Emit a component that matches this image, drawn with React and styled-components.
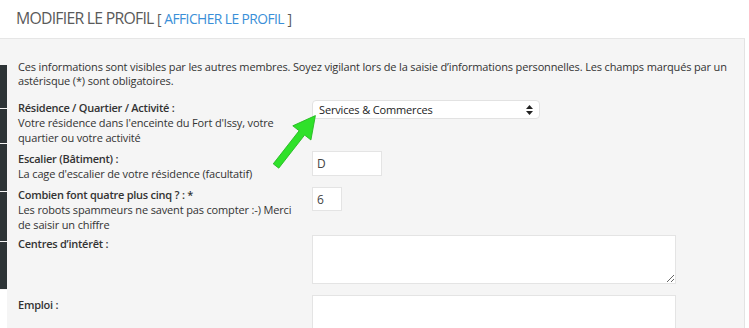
import React from "react";
import styled, { createGlobalStyle } from "styled-components";

const GlobalStyle = createGlobalStyle`
  html, body {
    margin: 0;
    padding: 0;
    background: #fff;
    font-family: "Open Sans", "DejaVu Sans", sans-serif;
    color: #333;
  }
`;

const Page = styled.div`
  width: 749px;
  height: 328px;
  overflow: hidden;
  position: relative;
`;

const Header = styled.div`
  height: 38px;
  box-sizing: border-box;
  padding: 7px 0 0 16px;
  font-size: 15.8px;
  letter-spacing: -0.75px;
  color: #5a5a5a;
  white-space: nowrap;
`;

const Bracket = styled.span`
  font-size: 13.8px;
  letter-spacing: -0.5px;
`;

const ProfileLink = styled.a`
  color: #3a8fd8;
  text-decoration: none;
  font-size: 13.8px;
  letter-spacing: -0.55px;
`;

const Panel = styled.div`
  position: relative;
  width: 745px;
  height: 290px;
  box-sizing: border-box;
  background: #f5f5f5;
  border-top: 1px solid #e6e6e6;
  border-right: 1px solid #e3e3e3;
  padding: 21px 0 0 18px;
  font-size: 11px;
  letter-spacing: -0.15px;
  line-height: 15px;
`;

const Intro = styled.p`
  margin: 0 0 12px 0;
  width: 712px;
  line-height: 14px;
`;

const Row = styled.div`
  display: grid;
  grid-template-columns: 294px 1fr;
  margin-bottom: ${(p) => p.gap || 6}px;
`;

const LabelCell = styled.div`
  padding-top: ${(p) => p.top || 0}px;
`;

const Label = styled.div`
  font-weight: 600;
  letter-spacing: -0.25px;
`;

const Help = styled.div`
  width: 286px;
`;

const SelectBox = styled.div`
  width: 228px;
  height: 19px;
  box-sizing: border-box;
  background: #fff;
  border: 1px solid #e2e2e2;
  border-radius: 4px;
  display: flex;
  align-items: center;
  justify-content: space-between;
  padding: 0 6px 0 6px;
  font-size: 11px;
  color: #222;
`;

const Field = styled.input`
  display: block;
  width: ${(p) => p.w}px;
  height: ${(p) => p.h}px;
  box-sizing: border-box;
  border: 1px solid #e4e4e4;
  background: #fff;
  padding: 0 4px;
  font-family: "Open Sans", "DejaVu Sans", sans-serif;
  font-size: 12px;
  color: #444;
  outline: none;
`;

const Area = styled.textarea`
  display: block;
  width: 364px;
  height: 49px;
  box-sizing: border-box;
  border: 1px solid #e4e4e4;
  background: #fff;
  margin: 0 0 6px 0;
  font-family: "Open Sans", "DejaVu Sans", sans-serif;
  outline: none;
`;

const SideStrip = styled.div`
  position: absolute;
  left: 0;
  top: 65px;
  width: 7px;
  display: flex;
  flex-direction: column;
  gap: 1px;
`;

const StripPiece = styled.div`
  height: ${(p) => p.h}px;
  background: ${(p) => (p.blank ? "#fff" : "#2d3436")};
`;

const Arrow = styled.svg`
  position: absolute;
  left: 262px;
  top: 65px;
`;

export default function App() {
  return (
    <Page>
      <GlobalStyle />
      <Header>
        MODIFIER LE PROFIL <Bracket>[</Bracket>{" "}
        <ProfileLink href="#">AFFICHER LE PROFIL</ProfileLink> <Bracket>]</Bracket>
      </Header>
      <Panel>
        <Intro>
          Ces informations sont visibles par les autres membres. Soyez vigilant
          lors de la saisie d’informations personnelles. Les champs marqués par un
          astérisque (*) sont obligatoires.
        </Intro>

        <Row>
          <LabelCell>
            <Label>Résidence / Quartier / Activité :</Label>
            <Help>
              Votre résidence dans l'enceinte du Fort d'Issy, votre quartier ou
              votre activité
            </Help>
          </LabelCell>
          <div>
            <SelectBox>
              <span>Services &amp; Commerces</span>
              <svg width="7" height="10" viewBox="0 0 7 10">
                <polygon points="3.5,0 7,4 0,4" fill="#222" />
                <polygon points="0,6 7,6 3.5,10" fill="#222" />
              </svg>
            </SelectBox>
          </div>
        </Row>

        <Row>
          <LabelCell>
            <Label>Escalier (Bâtiment) :</Label>
            <Help>La cage d'escalier de votre résidence (facultatif)</Help>
          </LabelCell>
          <div>
            <Field w={70} h={25} defaultValue="D" readOnly />
          </div>
        </Row>

        <Row gap={3}>
          <LabelCell>
            <Label>Combien font quatre plus cinq ? : *</Label>
            <Help>
              Les robots spammeurs ne savent pas compter :-) Merci de saisir un
              chiffre
            </Help>
          </LabelCell>
          <div>
            <Field w={30} h={24} defaultValue="6" readOnly />
          </div>
        </Row>

        <Row gap={5}>
          <LabelCell top={1}>
            <Label>Centres d’intérêt :</Label>
          </LabelCell>
          <div>
            <Area readOnly />
          </div>
        </Row>

        <Row>
          <LabelCell top={2}>
            <Label>Emploi :</Label>
          </LabelCell>
          <div>
            <Field w={364} h={40} readOnly />
          </div>
        </Row>

        <Arrow width="70" height="72" viewBox="0 0 70 72">
          <g transform="translate(14,62) rotate(-52)">
            <polygon
              points="0,-3.5 42,-3.5 42,-11.5 64,0 42,11.5 42,3.5 0,3.5"
              fill="#2fe12a"
              stroke="#25b820"
              strokeWidth="0.8"
              strokeLinejoin="round"
            />
          </g>
        </Arrow>
      </Panel>
      <SideStrip>
        <StripPiece h={43} />
        <StripPiece h={34} />
        <StripPiece h={47} />
        <StripPiece h={49} />
        <StripPiece h={47} />
        <StripPiece h={40} blank />
      </SideStrip>
    </Page>
  );
}
